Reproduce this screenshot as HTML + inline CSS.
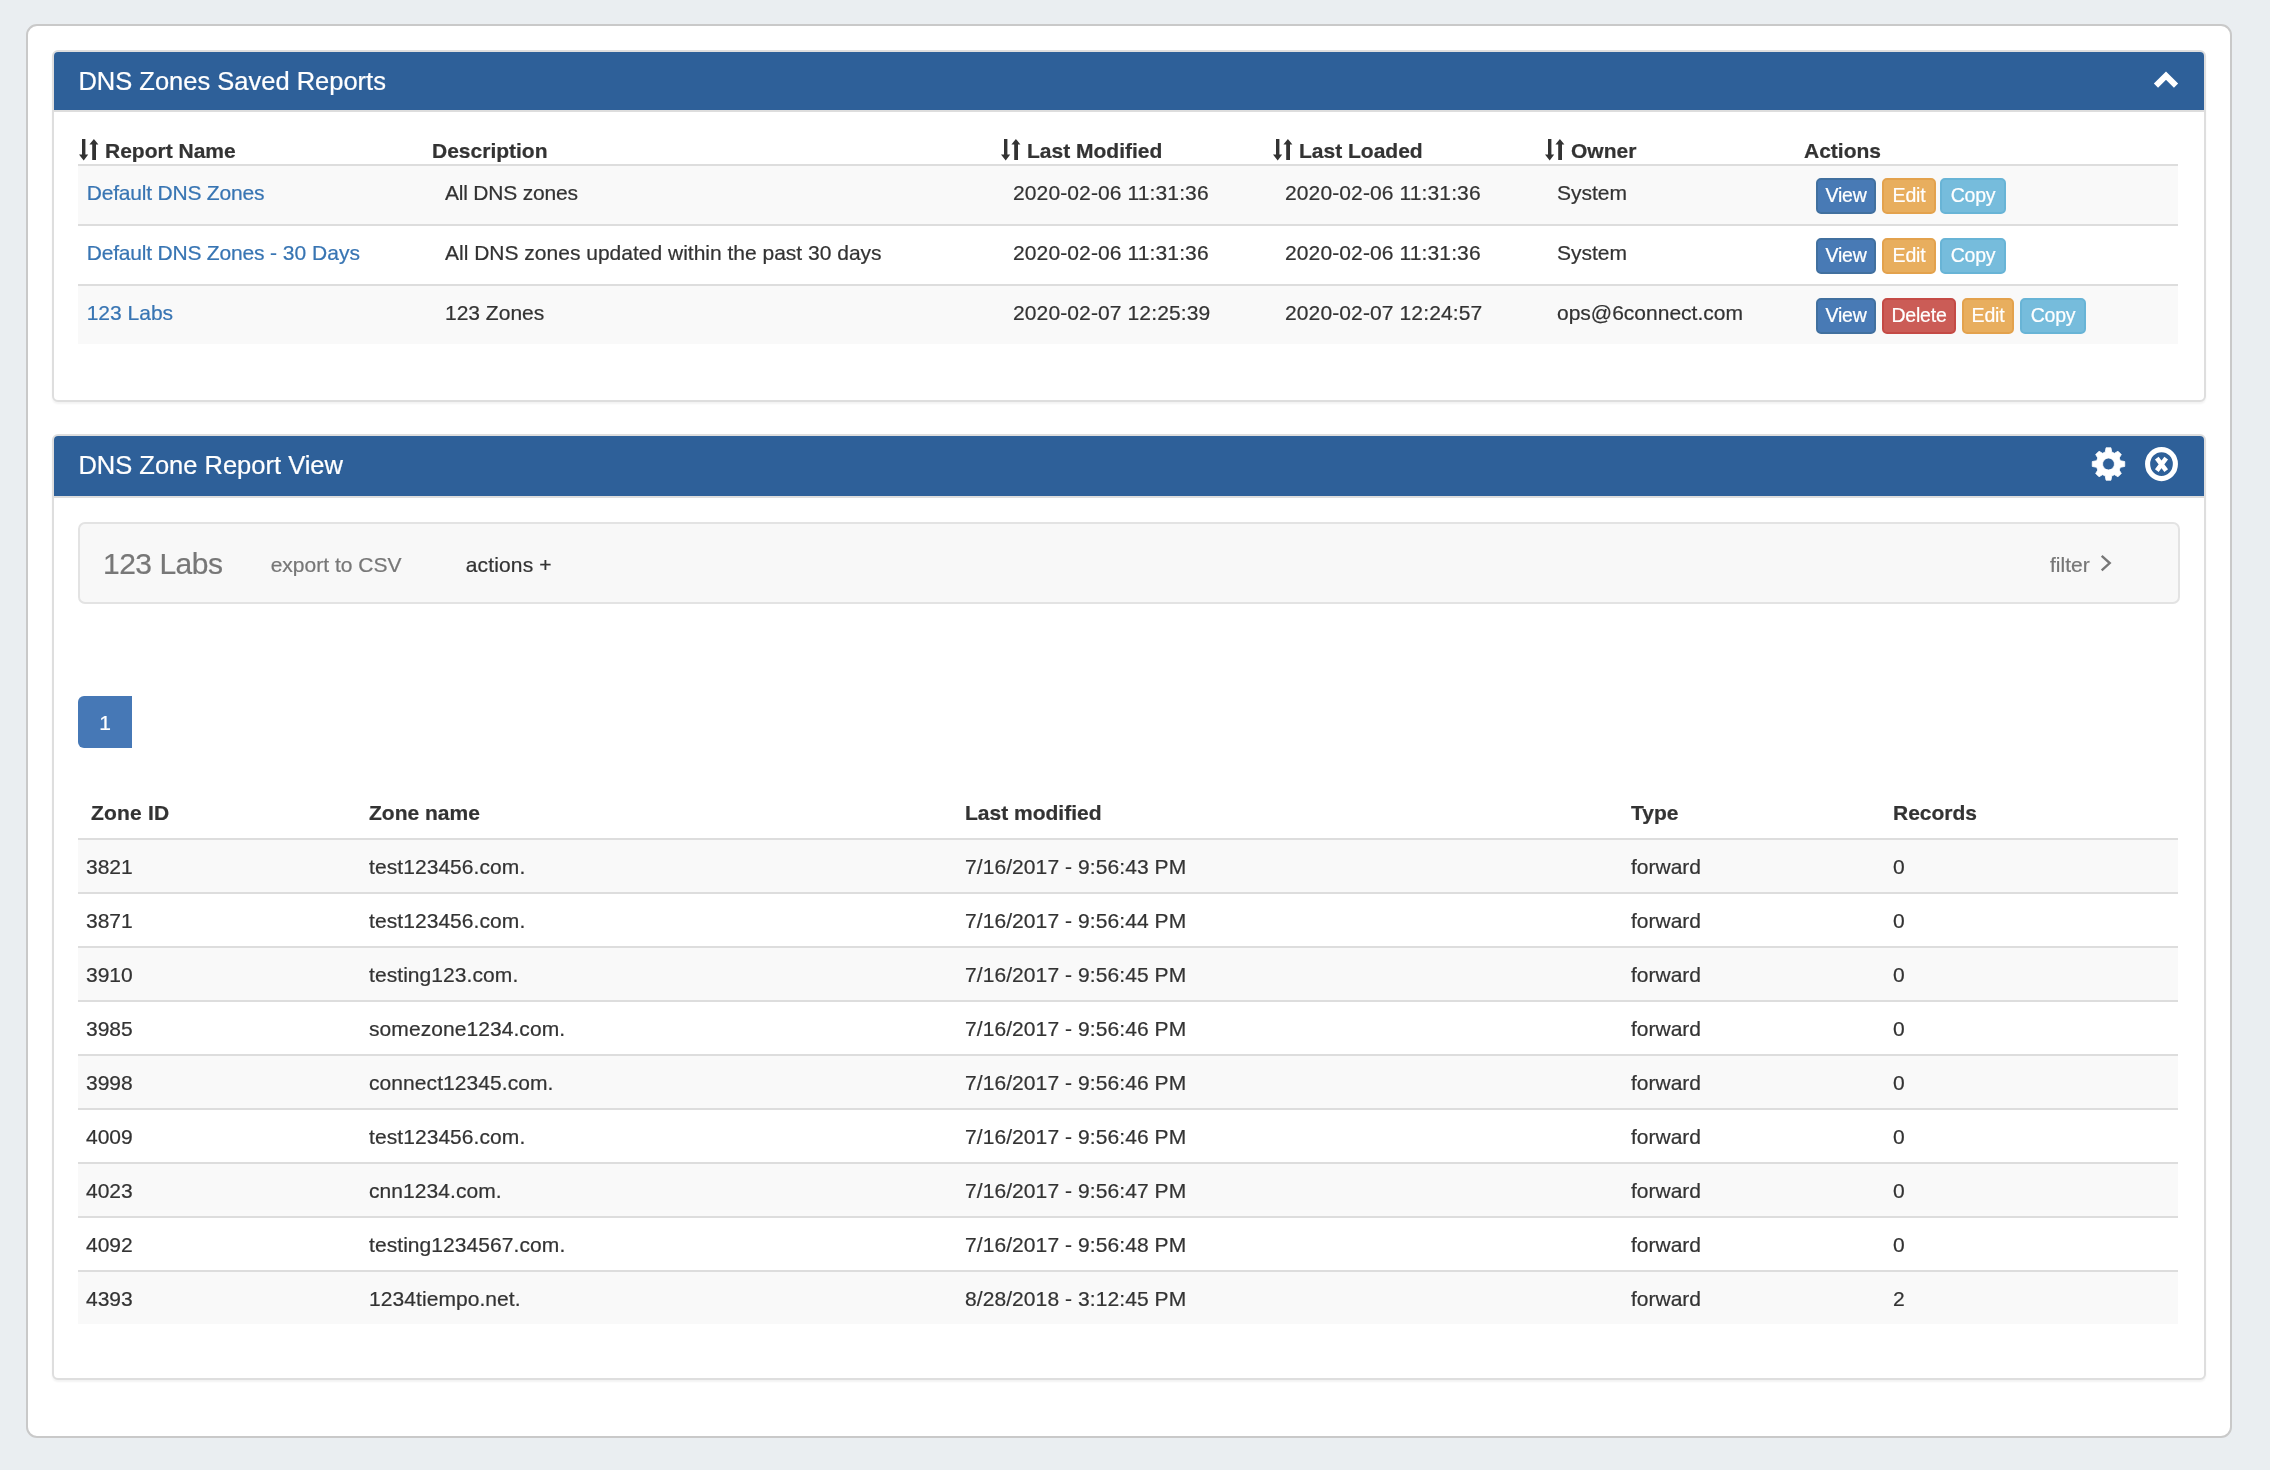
<!DOCTYPE html>
<html lang="en">
<head>
<meta charset="utf-8">
<title>DNS Zones Reports</title>
<style>
*{box-sizing:border-box;}
html,body{margin:0;padding:0;}
body{width:2270px;height:1470px;overflow:hidden;background:#eaeef1;font-family:"Liberation Sans",Arial,Helvetica,sans-serif;font-size:21px;line-height:30px;color:#333;position:relative;}
body{-webkit-text-stroke:0.22px;}
#layer{position:absolute;left:0;top:0;width:2270px;height:1470px;will-change:transform;}
.outer{position:absolute;left:26px;top:24px;width:2206px;height:1414px;background:#fff;border:2px solid #c9c9c9;border-radius:11px;}
.panel{position:absolute;left:52px;width:2154px;background:#fff;border:2px solid #dedede;border-radius:6px;box-shadow:0 2px 2px rgba(0,0,0,.05);}
#p1{top:50px;height:352px;}
#p2{top:434px;height:946px;}
.ph{position:absolute;left:0;top:0;right:0;background:#2e6099;border-bottom:2px solid #ddd;border-radius:4px 4px 0 0;color:#fff;}
#p1 .ph{height:60px;}
#p2 .ph{height:62px;}
.pt{position:absolute;left:24.4px;top:14px;font-size:25.5px;line-height:30px;white-space:nowrap;}
.abs{position:absolute;}
table{border-collapse:separate;border-spacing:0;table-layout:fixed;position:absolute;}
th,td{padding:0;text-align:left;vertical-align:top;white-space:nowrap;overflow:visible;}
th{font-weight:bold;}
a{color:#3875b3;text-decoration:none;}
.ls2{letter-spacing:-0.2px;}
/* table 1 */
#t1 th.sh .si{margin-left:-1px;}
.d1{letter-spacing:0.12px;}
.d2{letter-spacing:0.08px;}
.zn{letter-spacing:0.07px;}
#t1{left:78px;top:134px;width:2100px;}
#t1 th{height:32px;border-bottom:2px solid #ddd;line-height:27px;padding-top:3px;}
#t1 td{height:60px;border-top:2px solid #ddd;padding:12px 0 0 12px;}
#t1 tr.first td{height:58px;border-top:0;}
#t1 tr.odd td{background:#f9f9f9;}
#t1 td.c1{padding-left:8.7px;}
#t1 td.c2{padding-left:13px;}
.si{display:inline-block;width:21px;height:27px;vertical-align:top;margin-right:6px;position:relative;}
.si svg{position:absolute;left:-0.4px;top:2px;}
.btn{display:inline-block;vertical-align:top;height:36px;line-height:30px;font-size:19.5px;color:#fff;border:2px solid;border-radius:5px;padding:0;text-align:center;margin-right:6px;letter-spacing:-0.2px;}
.w60{width:60px}.w54{width:54px}.w52{width:52px}.w66{width:66px}.w74{width:74px}
.bv{background:#487ab5;border-color:#41709f;}
.be{background:#e8ae5e;border-color:#e3a24d;}
.bc{background:#76bcdc;border-color:#68b4d6;}
.bd{background:#cb5c56;border-color:#c44a45;}
/* well */
.well{position:absolute;left:78px;top:522px;width:2102px;height:82px;background:#f8f8f8;border:2px solid #e3e3e3;border-radius:7px;}
.well span{position:absolute;white-space:nowrap;line-height:30px;}
.pg{position:absolute;left:78px;top:696px;width:54px;height:52px;background:#4678b6;border-radius:6px 0 0 6px;color:#fff;text-align:center;line-height:54px;font-size:21px;}
/* table 2 */
#t2{left:78px;top:784px;width:2100px;}
#t2 th{height:56px;border-bottom:2px solid #ddd;padding:14px 0 0 12px;}
#t2 td{height:54px;border-top:2px solid #ddd;padding:12px 0 0 12px;}
#t2 tr.first td{height:52px;border-top:0;}
#t2 tr.odd td{background:#f9f9f9;}
#t2 td.c1{padding-left:8px;}
</style>
</head>
<body>
<div id="layer">
<div class="outer"></div>

<div class="panel" id="p1">
  <div class="ph"><div class="pt">DNS Zones Saved Reports</div>
    <svg class="abs" style="left:2098px;top:16px" width="28" height="22" viewBox="0 0 28 22"><path d="M3.96 17.7 L14 7.66 L24.04 17.7" fill="none" stroke="#fff" stroke-width="5.9"/></svg>
  </div>
</div>

<table id="t1">
  <colgroup><col style="width:354px"><col style="width:569px"><col style="width:272px"><col style="width:272px"><col style="width:259px"><col style="width:374px"></colgroup>
  <thead><tr>
    <th><span class="si"><svg width="21" height="22" viewBox="0 0 21 22"><path d="M4 0h3.4v15.6H10.2L5.7 21.4L1 15.6H4z M14.2 21h3.8V5.6h2.4L15.9 0L11.4 5.6h2.8z" fill="#333"/></svg></span>Report Name</th>
    <th>Description</th>
    <th class="sh"><span class="si"><svg width="21" height="22" viewBox="0 0 21 22"><path d="M4 0h3.4v15.6H10.2L5.7 21.4L1 15.6H4z M14.2 21h3.8V5.6h2.4L15.9 0L11.4 5.6h2.8z" fill="#333"/></svg></span>Last Modified</th>
    <th class="sh"><span class="si"><svg width="21" height="22" viewBox="0 0 21 22"><path d="M4 0h3.4v15.6H10.2L5.7 21.4L1 15.6H4z M14.2 21h3.8V5.6h2.4L15.9 0L11.4 5.6h2.8z" fill="#333"/></svg></span>Last Loaded</th>
    <th class="sh"><span class="si"><svg width="21" height="22" viewBox="0 0 21 22"><path d="M4 0h3.4v15.6H10.2L5.7 21.4L1 15.6H4z M14.2 21h3.8V5.6h2.4L15.9 0L11.4 5.6h2.8z" fill="#333"/></svg></span>Owner</th>
    <th>Actions</th>
  </tr></thead>
  <tbody>
  <tr class="first odd"><td class="c1"><a><span class="ls2">Default DNS Zones</span></a></td><td class="c2"><span class="ls2">All DNS zones</span></td><td class="d1">2020-02-06 11:31:36</td><td class="d1">2020-02-06 11:31:36</td><td>System</td><td><span class="btn bv w60">View</span><span class="btn be w54" style="margin-right:4px">Edit</span><span class="btn bc w66">Copy</span></td></tr>
  <tr><td class="c1"><a><span class="ls2">Default DNS Zones</span> - 30 Days</a></td><td class="c2">All DNS zones updated within the past 30 days</td><td class="d1">2020-02-06 11:31:36</td><td class="d1">2020-02-06 11:31:36</td><td>System</td><td><span class="btn bv w60">View</span><span class="btn be w54" style="margin-right:4px">Edit</span><span class="btn bc w66">Copy</span></td></tr>
  <tr class="odd"><td class="c1"><a>123 Labs</a></td><td class="c2">123 Zones</td><td class="d1">2020-02-07 12:25:39</td><td class="d1">2020-02-07 12:24:57</td><td>ops@6connect.com</td><td><span class="btn bv w60">View</span><span class="btn bd w74">Delete</span><span class="btn be w52">Edit</span><span class="btn bc w66">Copy</span></td></tr>
  </tbody>
</table>

<div class="panel" id="p2">
  <div class="ph"><div class="pt" style="top:14px">DNS Zone Report View</div>
    <svg class="abs" style="left:2036px;top:10px" width="36" height="36" viewBox="-0.5 0 36 36"><path fill="#fff" fill-rule="evenodd" stroke="#fff" stroke-width="0.8" stroke-linejoin="round" d="M14.71 6.15 L15.55 1.78 L20.45 1.78 L21.29 6.15 L24.06 7.29 L27.44 5.20 L30.80 8.56 L28.71 11.94 L29.85 14.71 L34.22 15.55 L34.22 20.45 L29.85 21.29 L28.71 24.06 L30.80 27.44 L27.44 30.80 L24.06 28.71 L21.29 29.85 L20.45 34.22 L15.55 34.22 L14.71 29.85 L11.94 28.71 L8.56 30.80 L5.20 27.44 L7.29 24.06 L6.15 21.29 L1.78 20.45 L1.78 15.55 L6.15 14.71 L7.29 11.94 L5.20 8.56 L8.56 5.20 L11.94 7.29Z M18 12.1 a5.9 5.9 0 1 0 0.01 0z"/></svg>
    <svg class="abs" style="left:2089px;top:10px" width="36" height="36" viewBox="-0.5 0 36 36"><ellipse cx="18" cy="18.1" rx="13.9" ry="14.5" fill="none" stroke="#fff" stroke-width="5.1"/><path d="M13.3 12.2 L22.7 24.6 M22.7 12.2 L13.3 24.6" stroke="#fff" stroke-width="4.6" fill="none"/></svg>
  </div>
</div>

<div class="well">
  <span style="left:23px;top:25px;font-size:30px;letter-spacing:-0.5px;color:#777">123 Labs</span>
  <span style="left:190.7px;top:26px;color:#777">export to CSV</span>
  <span style="left:385.7px;top:26px;color:#333;letter-spacing:0.15px">actions +</span>
  <span style="left:1970px;top:26px;color:#777">filter</span>
  <svg class="abs" style="left:2019px;top:28px" width="16" height="22" viewBox="0 0 16 22"><path d="M2.7 3.9 L10.7 11.1 L2.7 18.3" fill="none" stroke="#777" stroke-width="2.4"/></svg>
</div>

<div class="pg">1</div>

<table id="t2">
  <colgroup><col style="width:279px"><col style="width:596px"><col style="width:666px"><col style="width:262px"><col style="width:297px"></colgroup>
  <thead><tr><th style="padding-left:13px;letter-spacing:0.2px">Zone ID</th><th>Zone name</th><th>Last modified</th><th>Type</th><th>Records</th></tr></thead>
  <tbody>
  <tr class="first odd"><td class="c1">3821</td><td class="zn">test123456.com.</td><td class="d2">7/16/2017 - 9:56:43 PM</td><td>forward</td><td>0</td></tr>
  <tr><td class="c1">3871</td><td class="zn">test123456.com.</td><td class="d2">7/16/2017 - 9:56:44 PM</td><td>forward</td><td>0</td></tr>
  <tr class="odd"><td class="c1">3910</td><td class="zn">testing123.com.</td><td class="d2">7/16/2017 - 9:56:45 PM</td><td>forward</td><td>0</td></tr>
  <tr><td class="c1">3985</td><td class="zn">somezone1234.com.</td><td class="d2">7/16/2017 - 9:56:46 PM</td><td>forward</td><td>0</td></tr>
  <tr class="odd"><td class="c1">3998</td><td class="zn">connect12345.com.</td><td class="d2">7/16/2017 - 9:56:46 PM</td><td>forward</td><td>0</td></tr>
  <tr><td class="c1">4009</td><td class="zn">test123456.com.</td><td class="d2">7/16/2017 - 9:56:46 PM</td><td>forward</td><td>0</td></tr>
  <tr class="odd"><td class="c1">4023</td><td class="zn">cnn1234.com.</td><td class="d2">7/16/2017 - 9:56:47 PM</td><td>forward</td><td>0</td></tr>
  <tr><td class="c1">4092</td><td class="zn">testing1234567.com.</td><td class="d2">7/16/2017 - 9:56:48 PM</td><td>forward</td><td>0</td></tr>
  <tr class="odd"><td class="c1">4393</td><td class="zn">1234tiempo.net.</td><td class="d2">8/28/2018 - 3:12:45 PM</td><td>forward</td><td>2</td></tr>
  </tbody>
</table>
</div>
</body>
</html>
